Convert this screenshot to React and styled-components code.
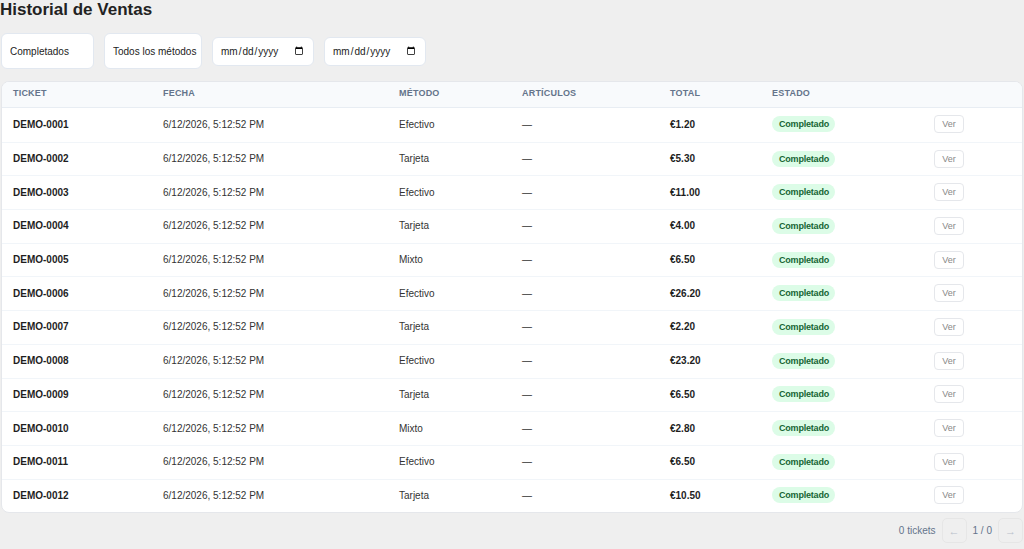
import React from 'react';
import styled, { createGlobalStyle } from 'styled-components';

const GlobalStyle = createGlobalStyle`
    html, body {
        margin: 0;
        padding: 0;
        background: #efefef;
        font-family: "Liberation Sans", Arial, sans-serif;
        color: #1f2937;
    }
    * { box-sizing: border-box; }
`;

const methods = ["Efectivo", "Tarjeta", "Efectivo", "Tarjeta", "Mixto", "Efectivo", "Tarjeta", "Efectivo", "Tarjeta", "Mixto", "Efectivo", "Tarjeta"];
const totals = ["1.20", "5.30", "11.00", "4.00", "6.50", "26.20", "2.20", "23.20", "6.50", "2.80", "6.50", "10.50"];

const sales = methods.map((method, i) => ({
    id: `DEMO-${String(i + 1).padStart(4, "0")}`,
    date: "6/12/2026, 5:12:52 PM",
    method,
    total: totals[i],
}));

const headers = ["Ticket", "Fecha", "Método", "Artículos", "Total", "Estado", ""];

function App() {
    return (
        <Page>
            <GlobalStyle />
            <Title>Historial de Ventas</Title>
            <Filters>
                <Select $width={93} defaultValue="completados">
                    <option value="completados">Completados</option>
                </Select>
                <Select $width={98} defaultValue="todos">
                    <option value="todos">Todos los métodos</option>
                </Select>
                <DateInput type="date" />
                <DateInput type="date" />
            </Filters>
            <Card>
                <HeadRow>
                    {headers.map((h, i) => (
                        <HeadCell key={i}>{h}</HeadCell>
                    ))}
                </HeadRow>
                {sales.map((sale) => (
                    <Row key={sale.id}>
                        <Cell $bold>{sale.id}</Cell>
                        <Cell>{sale.date}</Cell>
                        <Cell>{sale.method}</Cell>
                        <Cell>—</Cell>
                        <Cell $bold>€{sale.total}</Cell>
                        <Cell><Badge>Completado</Badge></Cell>
                        <Cell><SmallButton>Ver</SmallButton></Cell>
                    </Row>
                ))}
            </Card>
            <Footer>
                <Count>0 tickets</Count>
                <PageButton>←</PageButton>
                <PageInfo>1 / 0</PageInfo>
                <PageButton>→</PageButton>
            </Footer>
        </Page>
    );
}

export default App;

const Page = styled.div`
    width: 1024px;
    padding: 0 0 0 1px;
    display: flex;
    flex-direction: column;
`;

const Title = styled.h1`
    margin: 0;
    font-size: 17px;
    line-height: 20px;
    font-weight: 700;
    color: #222;
    margin-left: -1px;
`;

const Filters = styled.div`
    display: flex;
    align-items: center;
    gap: 10px;
    margin-top: 13px;
`;

const Select = styled.select`
    appearance: none;
    width: ${(p) => p.$width}px;
    height: 36px;
    padding: 0 4px 0 8px;
    background: #fff;
    border: 1px solid #e2e8f0;
    border-radius: 6px;
    font-family: "Liberation Sans", Arial, sans-serif;
    font-size: 10px;
    color: #222;
`;

const DateInput = styled.input`
    width: 102px;
    height: 29px;
    padding: 0 7px 0 7px;
    background: #fff;
    border: 1px solid #e2e8f0;
    border-radius: 6px;
    font-family: "Liberation Sans", Arial, sans-serif;
    font-size: 10px;
    color: #222;
`;

const Card = styled.div`
    margin-top: 12px;
    width: 1022px;
    background: #fff;
    border: 1px solid #e5e7eb;
    border-radius: 8px;
    overflow: hidden;
`;

const columns = "150px 236px 123px 148px 102px 162px 1fr";

const HeadRow = styled.div`
    display: grid;
    grid-template-columns: ${columns};
    height: 26px;
    padding-top: 6px;
    background: #f8fafc;
    border-bottom: 1px solid #e8edf3;
`;

const HeadCell = styled.div`
    padding-left: 11px;
    font-size: 9px;
    line-height: 11px;
    font-weight: 700;
    letter-spacing: 0.2px;
    text-transform: uppercase;
    color: #64748b;
`;

const Row = styled.div`
    display: grid;
    grid-template-columns: ${columns};
    height: 33.7px;
    padding-bottom: 1px;
    align-items: center;
    border-top: 1px solid #f1f5f9;
    &:nth-child(2) { border-top: none; }
`;

const Cell = styled.div`
    padding-left: 11px;
    font-size: 10px;
    font-weight: ${(p) => (p.$bold ? 700 : 400)};
    color: ${(p) => (p.$bold ? "#1e1e1e" : "#333")};
`;

const Badge = styled.span`
    display: inline-block;
    padding: 3px 6px 2px 7px;
    border-radius: 999px;
    background: #dcfce7;
    color: #166534;
    font-size: 9px;
    font-weight: 700;
    line-height: 11px;
    letter-spacing: -0.2px;
`;

const SmallButton = styled.button`
    width: 30px;
    height: 18px;
    padding: 0;
    background: #fff;
    border: 1px solid #e5e7eb;
    border-radius: 4px;
    font-family: "Liberation Sans", Arial, sans-serif;
    font-size: 9px;
    color: #888;
`;

const Footer = styled.div`
    display: flex;
    justify-content: flex-end;
    align-items: center;
    gap: 6px;
    margin-top: 5px;
    height: 25px;
    margin-right: 1px;
`;

const Count = styled.span`
    font-size: 10px;
    color: #64748b;
`;

const PageButton = styled.button`
    width: 25px;
    height: 25px;
    padding: 0;
    background: #efefef;
    border: 1px solid #e6e6e6;
    border-radius: 5px;
    font-family: "Liberation Sans", Arial, sans-serif;
    font-size: 11px;
    color: #b8bfca;
`;

const PageInfo = styled.span`
    font-size: 10px;
    color: #64748b;
`;
